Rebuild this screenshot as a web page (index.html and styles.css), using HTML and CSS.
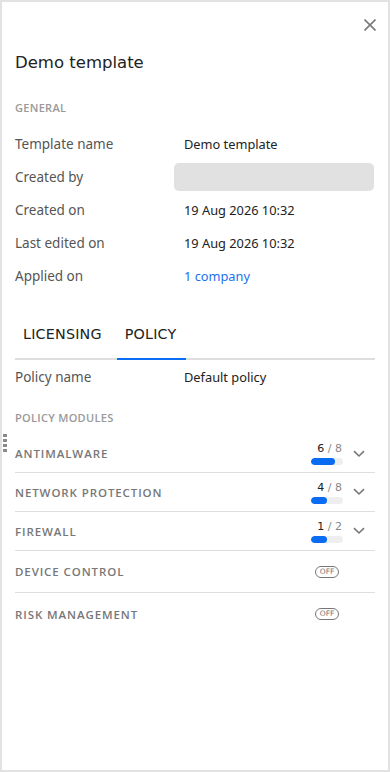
FILE: index.html
```html
<!DOCTYPE html>
<html lang="en">

<head>
    <meta charset="UTF-8" />
    <meta name="viewport" content="width=device-width, initial-scale=1.0" />
    <title>Demo template</title>
    <link rel="stylesheet" href="styles.css">
</head>

<body>

    <div class="panel">
        <!-- Header -->
        <div class="close-row">
            <button class="close" aria-label="Close">
                <svg width="12" height="12" viewBox="0 0 12 12">
                    <path d="M0.5 0.5 L11.5 11.5 M11.5 0.5 L0.5 11.5" stroke="#7a7a7a" stroke-width="1.6" />
                </svg>
            </button>
        </div>
        <h1 class="title">Demo template</h1>

        <!-- General -->
        <div class="section-label">General</div>
        <div class="details">
            <div class="row">
                <span class="label">Template name</span>
                <span class="value">Demo template</span>
            </div>
            <div class="row">
                <span class="label">Created by</span>
                <span class="placeholder"></span>
            </div>
            <div class="row">
                <span class="label">Created on</span>
                <span class="value">19 Aug 2026 10:32</span>
            </div>
            <div class="row">
                <span class="label">Last edited on</span>
                <span class="value">19 Aug 2026 10:32</span>
            </div>
            <div class="row">
                <span class="label">Applied on</span>
                <span class="value"><a class="link" href="#">1 company</a></span>
            </div>
        </div>

        <!-- Tabs -->
        <div class="tabs">
            <div class="tab">Licensing</div>
            <div class="tab active">Policy</div>
        </div>

        <div class="row">
            <span class="label">Policy name</span>
            <span class="value">Default policy</span>
        </div>

        <div class="section-label modules-label">Policy modules</div>

        <div class="modules">
            <span class="handle"><i></i><i></i><i></i><i></i></span>

            <div class="module">
                <span class="module-name">Antimalware</span>
                <div class="status">
                    <div class="count"><b>6</b> / 8</div>
                    <div class="bar"><div class="fill" style="width: 75%"></div></div>
                </div>
                <span class="chevron">
                    <svg width="12" height="8" viewBox="0 0 12 8">
                        <path d="M1 1.2 L6 6 L11 1.2" fill="none" stroke="#777" stroke-width="1.6" />
                    </svg>
                </span>
            </div>

            <div class="module">
                <span class="module-name">Network protection</span>
                <div class="status">
                    <div class="count"><b>4</b> / 8</div>
                    <div class="bar"><div class="fill" style="width: 50%"></div></div>
                </div>
                <span class="chevron">
                    <svg width="12" height="8" viewBox="0 0 12 8">
                        <path d="M1 1.2 L6 6 L11 1.2" fill="none" stroke="#777" stroke-width="1.6" />
                    </svg>
                </span>
            </div>

            <div class="module">
                <span class="module-name">Firewall</span>
                <div class="status">
                    <div class="count"><b>1</b> / 2</div>
                    <div class="bar"><div class="fill" style="width: 50%"></div></div>
                </div>
                <span class="chevron">
                    <svg width="12" height="8" viewBox="0 0 12 8">
                        <path d="M1 1.2 L6 6 L11 1.2" fill="none" stroke="#777" stroke-width="1.6" />
                    </svg>
                </span>
            </div>

            <div class="module tall">
                <span class="module-name">Device control</span>
                <div class="status">
                    <span class="off">OFF</span>
                </div>
                <span class="chevron"></span>
            </div>

            <div class="module tall">
                <span class="module-name">Risk management</span>
                <div class="status">
                    <span class="off">OFF</span>
                </div>
                <span class="chevron"></span>
            </div>
        </div>
    </div>

</body>

</html>
```

FILE: styles.css
```css
* {
    box-sizing: border-box;
}

body {
    margin: 0;
    background-color: #e2e2e2;
    font-family: "Noto Sans", Roboto, sans-serif;
}

.panel {
    height: 100vh;
    border: 2px solid #e2e2e2;
    background-color: #fff;
    padding: 11px 13px 0 13px;
    position: relative;
}

.close-row {
    display: flex;
    justify-content: flex-end;
    height: 24px;
}

.close {
    border: none;
    background: none;
    padding: 0;
    margin-right: -1px;
    width: 12px;
    height: 24px;
    display: flex;
    align-items: center;
    cursor: pointer;
}

.title {
    margin: 14px 0 0 0;
    font-family: "DejaVu Sans", sans-serif;
    font-weight: normal;
    font-size: 16.5px;
    line-height: 24px;
    color: #222;
}

.section-label {
    margin-top: 25px;
    font-family: "Open Sans", sans-serif;
    font-size: 11px;
    font-weight: 600;
    letter-spacing: 0.3px;
    line-height: 16px;
    text-transform: uppercase;
    color: #999;
}

.details {
    margin-top: 11px;
}

.row {
    display: grid;
    grid-template-columns: 159px 1fr;
    align-items: center;
    height: 33px;
}

.label {
    font-size: 13.5px;
    color: #555;
}

.value {
    padding-left: 10px;
    font-size: 12.8px;
    color: #222;
}

.placeholder {
    display: block;
    width: 200px;
    height: 28px;
    border-radius: 5px;
    background-color: #e1e1e1;
}

.link {
    color: #1b6ff0;
    text-decoration: none;
}

.tabs {
    margin-top: 20px;
    display: flex;
    gap: 7px;
    border-bottom: 2px solid #dedede;
}

.tab {
    height: 46px;
    padding: 0 8px 2px 8px;
    line-height: 44px;
    font-family: "DejaVu Sans", sans-serif;
    font-size: 14.3px;
    letter-spacing: 0.2px;
    text-transform: uppercase;
    color: #222;
}

.tab.active {
    border-bottom: 2px solid #0b6ef5;
    margin-bottom: -2px;
    height: 48px;
    padding-right: 9px;
}

.modules-label {
    margin-top: 17px;
}

.modules {
    margin-top: 7px;
    position: relative;
}

.handle {
    position: absolute;
    left: -12px;
    top: 1px;
    display: flex;
    flex-direction: column;
    gap: 2px;
}

.handle i {
    display: block;
    width: 4px;
    height: 3px;
    background-color: #8a8a8a;
}

.module {
    display: flex;
    align-items: center;
    height: 39px;
    border-bottom: 1px solid #dedede;
}

.module:first-of-type {
    height: 40px;
    padding-top: 2px;
}

.module.tall {
    height: 42px;
}

.module:last-child {
    border-bottom: none;
}

.module-name {
    flex: 1;
    font-family: "Open Sans", sans-serif;
    font-size: 11.5px;
    font-weight: 600;
    letter-spacing: 0.9px;
    text-transform: uppercase;
    color: #777;
}

.status {
    width: 32px;
    display: flex;
    flex-direction: column;
    align-items: center;
}

.count {
    align-self: flex-end;
    margin-right: 1px;
    font-family: "DejaVu Sans", sans-serif;
    font-size: 11px;
    line-height: 14px;
    color: #888;
}

.count b {
    font-weight: normal;
    color: #222;
}

.bar {
    margin-top: 2px;
    width: 32px;
    height: 7px;
    border-radius: 4px;
    background-color: #eeeeee;
    overflow: hidden;
}

.fill {
    height: 100%;
    border-radius: 4px;
    background-color: #0a6cf2;
}

.off {
    display: block;
    width: 24px;
    height: 12px;
    border: 1px solid #777;
    border-radius: 6px;
    font-family: "DejaVu Sans", sans-serif;
    font-size: 7.5px;
    line-height: 10px;
    text-align: center;
    color: #777;
}

.chevron {
    width: 32px;
    display: flex;
    justify-content: center;
}
```
